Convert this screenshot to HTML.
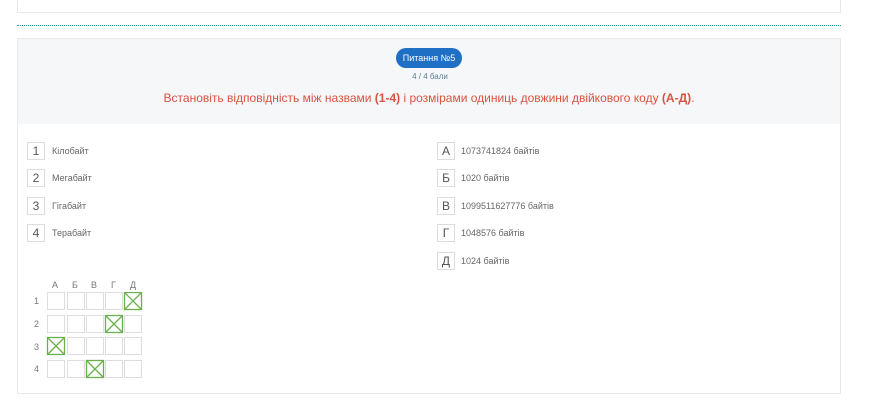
<!DOCTYPE html>
<html><head><meta charset="utf-8"><style>
body{margin:0;width:870px;height:400px;background:#fff;font-family:"Liberation Sans",sans-serif;position:relative;overflow:hidden}
.a{position:absolute}
.card1{left:17px;top:-5px;width:822px;height:16px;border:1px solid #e6e8ea;background:#fff}
.dot{left:17px;top:25px;width:824px;border-top:1px dotted #2f8fb0}
.card2{left:17px;top:38px;width:822px;height:354px;border:1px solid #e8eaec;background:#fff}
.head{left:18px;top:39px;width:822px;height:85px;background:#f6f7f8}
.badge{left:396px;top:48px;width:66px;height:20px;border-radius:10px;background:#1f6fc5;color:#fff;font-size:9px;line-height:20px;text-align:center}
.pts{left:380px;top:72px;width:100px;text-align:center;font-size:8px;color:#5a7f96}
.q{left:18px;top:91px;width:822px;text-align:center;font-size:12px;color:#d9533f}
.q b{font-weight:bold}
.box{width:16px;height:16px;border:1px solid #dcdcdc;font-size:12px;color:#555;text-align:center;line-height:16px}
.t{font-size:9px;color:#666;line-height:18px}
.hl{font-size:9px;color:#777}
</style></head><body>
<div class="a card1"></div>
<div class="a dot"></div>
<div class="a card2"></div>
<div class="a head"></div>
<div class="a badge">Питання №5</div>
<div class="a pts">4 / 4 бали</div>
<div class="a q">Встановіть відповідність між назвами <b>(1-4)</b> і розмірами одиниць довжини двійкового коду <b>(А-Д)</b>.</div>

<div class="a box" style="left:27px;top:142px">1</div><div class="a t" style="left:52px;top:142px">Кілобайт</div>
<div class="a box" style="left:27px;top:169px">2</div><div class="a t" style="left:52px;top:169px">Мегабайт</div>
<div class="a box" style="left:27px;top:197px">3</div><div class="a t" style="left:52px;top:197px">Гігабайт</div>
<div class="a box" style="left:27px;top:224px">4</div><div class="a t" style="left:52px;top:224px">Терабайт</div>

<div class="a box" style="left:437px;top:142px">А</div><div class="a t" style="left:461px;top:142px">1073741824 байтів</div>
<div class="a box" style="left:437px;top:169px">Б</div><div class="a t" style="left:461px;top:169px">1020 байтів</div>
<div class="a box" style="left:437px;top:197px">В</div><div class="a t" style="left:461px;top:197px">1099511627776 байтів</div>
<div class="a box" style="left:437px;top:224px">Г</div><div class="a t" style="left:461px;top:224px">1048576 байтів</div>
<div class="a box" style="left:437px;top:252px">Д</div><div class="a t" style="left:461px;top:252px">1024 байтів</div>

<div class="a hl" style="left:52px;top:280px">А</div>
<div class="a hl" style="left:72px;top:280px">Б</div>
<div class="a hl" style="left:91px;top:280px">В</div>
<div class="a hl" style="left:111px;top:280px">Г</div>
<div class="a hl" style="left:130px;top:280px">Д</div>
<div class="a hl" style="left:34px;top:296px">1</div>
<div class="a hl" style="left:34px;top:319px">2</div>
<div class="a hl" style="left:34px;top:342px">3</div>
<div class="a hl" style="left:34px;top:364px">4</div>
<svg class="a" style="left:46px;top:292px" width="100" height="90">
<g fill="none" stroke="#ddd">
<rect x="1.5" y="0.5" width="17" height="17"/><rect x="21.5" y="0.5" width="17" height="17"/><rect x="40.5" y="0.5" width="17" height="17"/><rect x="59.5" y="0.5" width="17" height="17"/><rect x="78.5" y="0.5" width="17" height="17"/>
<rect x="1.5" y="23.5" width="17" height="17"/><rect x="21.5" y="23.5" width="17" height="17"/><rect x="40.5" y="23.5" width="17" height="17"/><rect x="59.5" y="23.5" width="17" height="17"/><rect x="78.5" y="23.5" width="17" height="17"/>
<rect x="1.5" y="45.5" width="17" height="17"/><rect x="21.5" y="45.5" width="17" height="17"/><rect x="40.5" y="45.5" width="17" height="17"/><rect x="59.5" y="45.5" width="17" height="17"/><rect x="78.5" y="45.5" width="17" height="17"/>
<rect x="1.5" y="68.5" width="17" height="17"/><rect x="21.5" y="68.5" width="17" height="17"/><rect x="40.5" y="68.5" width="17" height="17"/><rect x="59.5" y="68.5" width="17" height="17"/><rect x="78.5" y="68.5" width="17" height="17"/>
</g>
<g fill="none" stroke="#6ab04c" stroke-width="1.3">
<rect x="78.5" y="0.5" width="17" height="17"/><path d="M78.5 .5L95.5 17.5M95.5 .5L78.5 17.5"/>
<rect x="59.5" y="23.5" width="17" height="17"/><path d="M59.5 23.5L76.5 40.5M76.5 23.5L59.5 40.5"/>
<rect x="1.5" y="45.5" width="17" height="17"/><path d="M1.5 45.5L18.5 62.5M18.5 45.5L1.5 62.5"/>
<rect x="40.5" y="68.5" width="17" height="17"/><path d="M40.5 68.5L57.5 85.5M57.5 68.5L40.5 85.5"/>
</g>
</svg>
</body></html>
